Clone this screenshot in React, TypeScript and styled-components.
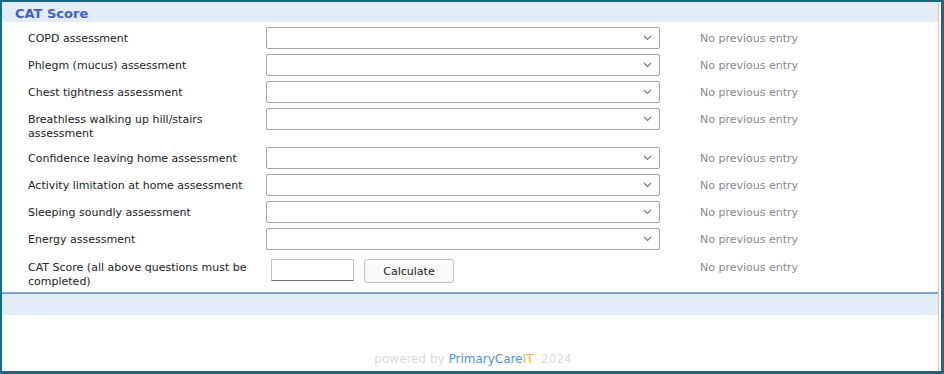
import React from 'react';
import styled, { createGlobalStyle } from 'styled-components';

const GlobalStyle = createGlobalStyle`
  html, body {
    margin: 0;
    padding: 0;
    background: #ffffff;
  }
  body {
    font-family: 'DejaVu Sans', Verdana, sans-serif;
    font-size: 11px;
    color: #222;
  }
`;

const Frame = styled.div`
  width: 944px;
  height: 374px;
  box-sizing: border-box;
  border: 2px solid #1f6787;
  border-right-width: 3px;
  border-bottom-width: 3px;
  display: flex;
  flex-direction: column;
  background: white;
`;

const Panel = styled.div`
  display: flex;
  flex-direction: column;
  flex: 1;
  margin-right: 2px;
  border-right: 1px solid #c8c8c8;
`;

const Header = styled.div`
  height: 20px;
  background: #e4ecf8;
  padding-left: 13px;
  display: flex;
  align-items: center;
`;

const Title = styled.h2`
  margin: 2px 0 0 0;
  font-size: 13px;
  font-weight: bold;
  color: #3d5fcf;
`;

const Form = styled.div`
  display: grid;
  grid-template-columns: 238px 394px auto;
  row-gap: 5px;
  padding: 5px 0 2px 26px;
  align-items: start;
`;

const Label = styled.div`
  padding: 5px 0 1px 0;
  line-height: 14px;
  color: #222;
`;

const Previous = styled.div`
  padding: 5px 0 0 40px;
  line-height: 14px;
  color: #8a8a8a;
`;

const SelectBox = styled.div`
  height: 22px;
  box-sizing: border-box;
  border: 1px solid #a4a4a4;
  border-radius: 2px;
  background: white;
  display: flex;
  align-items: center;
  justify-content: flex-end;
  padding-right: 7px;
`;

const ScoreCell = styled.div`
  display: flex;
  align-items: flex-start;
  gap: 10px;
  padding-left: 5px;
  margin-top: 4px;
`;

const ScoreInput = styled.input`
  width: 83px;
  height: 22px;
  box-sizing: border-box;
  border: 1px solid #c4c4c4;
  border-bottom-color: #6e6e6e;
  border-radius: 1px;
  font: inherit;
`;

const CalcButton = styled.button`
  width: 90px;
  height: 24px;
  border: 1px solid #c0c0c0;
  border-radius: 3px;
  background: #f9f9f9;
  font-family: 'DejaVu Sans', Verdana, sans-serif;
  font-size: 11px;
  color: #222;
  padding: 0;
`;

const ScoreLabel = styled(Label)`
  padding-top: 6px;
`;

const ScorePrevious = styled(Previous)`
  padding-top: 6px;
`;

const Divider = styled.div`
  border-top: 2px solid #7b9fe0;
  height: 21px;
  background: #e4ecf8;
`;

const Footer = styled.div`
  margin-top: auto;
  padding-bottom: 5px;
  text-align: center;
  font-size: 12px;
  line-height: 14px;
  color: #dcdcdc;
  padding-left: 6px;
`;

const Brand = styled.span<{ $accent?: boolean }>`
  color: ${p => (p.$accent ? '#f7b733' : '#4b94f0')};
`;

const Chevron = () => (
  <svg width="9" height="6" viewBox="0 0 9 6">
    <path d="M1 1 L4.5 4.5 L8 1" fill="none" stroke="#7a7a7a" strokeWidth="1.1" />
  </svg>
);

const questions = [
  'COPD assessment',
  'Phlegm (mucus) assessment',
  'Chest tightness assessment',
  'Breathless walking up hill/stairs assessment',
  'Confidence leaving home assessment',
  'Activity limitation at home assessment',
  'Sleeping soundly assessment',
  'Energy assessment',
];

const App: React.FC = () => {
  return (
    <>
      <GlobalStyle />
      <Frame>
        <Panel>
          <Header>
            <Title>CAT Score</Title>
          </Header>

          <Form>
            {questions.map(q => (
              <React.Fragment key={q}>
                <Label>{q}</Label>
                <SelectBox>
                  <Chevron />
                </SelectBox>
                <Previous>No previous entry</Previous>
              </React.Fragment>
            ))}
            <ScoreLabel>CAT Score (all above questions must be completed)</ScoreLabel>
            <ScoreCell>
              <ScoreInput type="text" />
              <CalcButton>Calculate</CalcButton>
            </ScoreCell>
            <ScorePrevious>No previous entry</ScorePrevious>
          </Form>

          <Divider />

          <Footer>
            powered by <Brand>PrimaryCare</Brand>
            <Brand $accent>IT</Brand>&nbsp; 2024
          </Footer>
        </Panel>
      </Frame>
    </>
  );
};

export default App;
